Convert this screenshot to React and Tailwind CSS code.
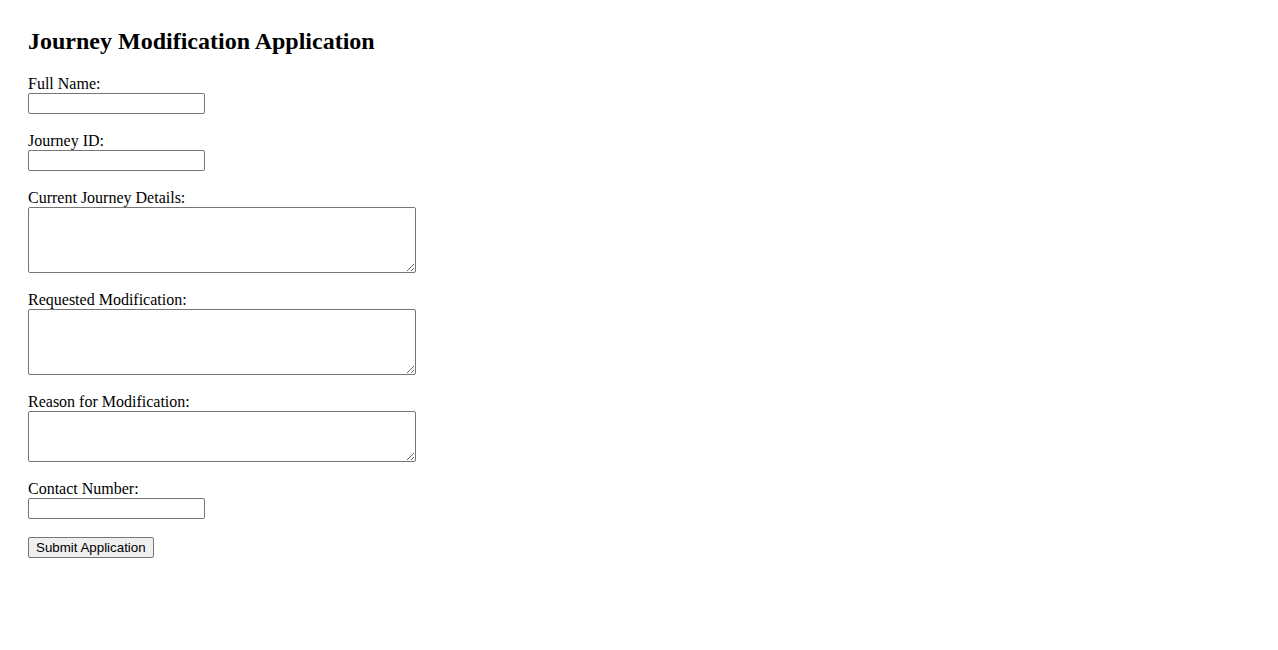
export default function App() {
  const inputCls =
    "block w-[177px] h-[21px] border border-[#767676] rounded-[2px] bg-white px-[2px] text-[13.33px] outline-none";
  const taCls =
    "block w-[388px] border border-[#767676] rounded-[2px] bg-white p-[2px] text-[13.33px] outline-none resize";
  return (
    <div
      className="min-h-screen bg-white text-black pt-[28px] pl-[28px] font-['Liberation_Serif',serif]"
    >
      <h2 className="text-[24px] font-bold leading-[26px] mb-[21px]">
        Journey Modification Application
      </h2>
      <form>
        <div className="mb-[18px]">
          <label className="block text-[16px] leading-[18px]">Full Name:</label>
          <input type="text" className={inputCls} />
        </div>
        <div className="mb-[18px]">
          <label className="block text-[16px] leading-[18px]">Journey ID:</label>
          <input type="text" className={inputCls} />
        </div>
        <div className="mb-[18px]">
          <label className="block text-[16px] leading-[18px]">Current Journey Details:</label>
          <textarea className={taCls + " h-[66px]"} />
        </div>
        <div className="mb-[18px]">
          <label className="block text-[16px] leading-[18px]">Requested Modification:</label>
          <textarea className={taCls + " h-[66px]"} />
        </div>
        <div className="mb-[18px]">
          <label className="block text-[16px] leading-[18px]">Reason for Modification:</label>
          <textarea className={taCls + " h-[51px]"} />
        </div>
        <div className="mb-[18px]">
          <label className="block text-[16px] leading-[18px]">Contact Number:</label>
          <input type="tel" className={inputCls} />
        </div>
        <button
          type="button"
          className="block h-[21px] px-[7px] bg-[#efefef] border border-[#767676] rounded-[2px] text-[13.33px] leading-[15px] font-['Liberation_Sans',Arial,sans-serif]"
        >
          Submit Application
        </button>
      </form>
    </div>
  );
}
